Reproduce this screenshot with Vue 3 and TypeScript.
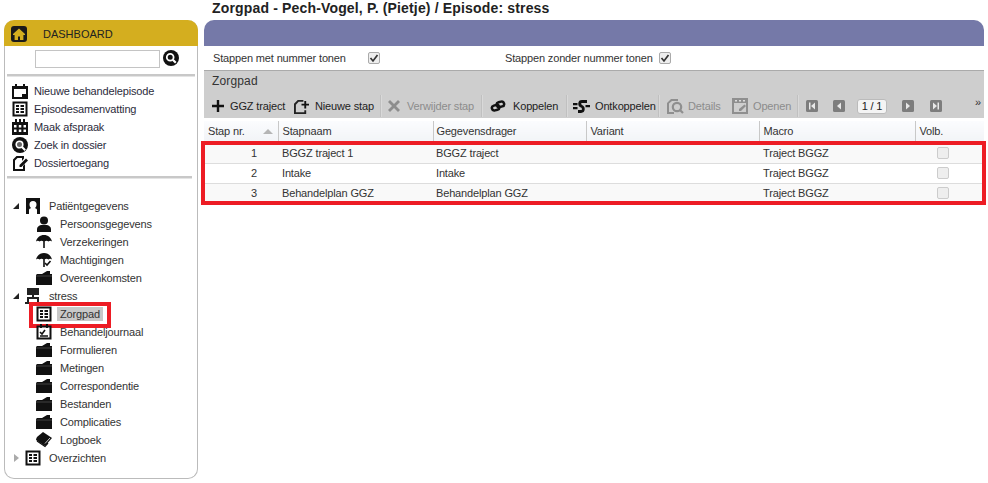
<template>
  <div class="page">
    <svg class="sprite" width="0" height="0" aria-hidden="true">
      <symbol id="i-home" viewBox="0 0 16 16"><rect x="0" y="0" width="16" height="16" rx="3" fill="#1a1a1a"/><path d="M8 2.500 2 8v1h1.600v5H7v-3.400h2V14h3.400V9H14V8z" fill="#d4ae1f"/></symbol>
      <symbol id="i-search" viewBox="0 0 16 16"><circle cx="8" cy="8" r="8" fill="#111"/><circle cx="7.200" cy="7.200" r="3.400" fill="none" stroke="#fff" stroke-width="1.800"/><path d="m9.800 9.800 3 3" stroke="#fff" stroke-width="2.200"/></symbol>
      <symbol id="i-cal-new" viewBox="0 0 16 16"><path d="M0 3h3V1h2v2h6V1h2v2h3v13H0zM2 6v8h8v-3h4V6z" fill="#111"/><path d="M11 12h3l-3 2z" fill="#111"/></symbol>
      <symbol id="i-list" viewBox="0 0 16 16"><path d="M1.500 1.500h13v13h-13z" fill="#fff" stroke="#111" stroke-width="2"/><path d="M4 4h3v2H4zM8.500 4H12v2H8.500zM4 7h3v2H4zM8.500 7H12v2H8.500zM4 10h3v2H4zM8.500 10H12v2H8.500z" fill="#111"/></symbol>
      <symbol id="i-cal" viewBox="0 0 16 16"><path d="M0 3h3V0h2v3h2V0h2v3h2V0h2v3h3v13H0z" fill="#111"/><path d="M2 6h2.500v2.500H2zM6.800 6h2.500v2.500H6.800zM11.500 6H14v2.500h-2.500zM2 10.500h2.500V13H2zM6.800 10.500h2.500V13H6.800zM11.500 10.500H14V13h-2.500z" fill="#fff"/></symbol>
      <symbol id="i-zoom" viewBox="0 0 16 16"><circle cx="8" cy="8" r="8" fill="#111"/><circle cx="7.500" cy="7.500" r="3.300" fill="#666" stroke="#fff" stroke-width="1.600"/><path d="m10 10 3.200 3.200" stroke="#fff" stroke-width="2"/></symbol>
      <symbol id="i-edit" viewBox="0 0 16 16"><path d="M4.500 1H12v2.500L10 6V3H5.500L3 5.500V14h8v-3l2-2v7H1V4.500z" fill="#111"/><path d="M14 3.500 16 5.500 9.500 12H7.500v-2z" fill="#111"/></symbol>
      <symbol id="i-patient" viewBox="0 0 16 16"><path d="M1 0h14v16h-3v-4c0-1-1-1.500-2-2 1-1 1.500-2 1.500-3.500a3.500 3.500 0 0 0-7 0C4.500 8 5 9 6 10c-1 .5-2 1-2 2v4H1z" fill="#111"/></symbol>
      <symbol id="i-person" viewBox="0 0 16 16"><circle cx="8" cy="4.500" r="4" fill="#111"/><path d="M1 16v-3c0-2 2-3.500 4-4h6c2 .5 4 2 4 4v3z" fill="#111"/></symbol>
      <symbol id="i-umbrella" viewBox="0 0 16 16"><path d="M8 1C4 1 1 3.500 0 7.500c1.200-1 2.500-1 3.500 0 1.200-1 2.500-1 3.700-.3V14h1.600V7.200c1.200-.7 2.500-.7 3.700.3 1-1 2.300-1 3.500 0C15 3.500 12 1 8 1z" fill="#111"/></symbol>
      <symbol id="i-umbrella-check" viewBox="0 0 16 16"><path d="M8 1C4 1 1 3.500 0 7.500c1.200-1 2.500-1 3.500 0 1.200-1 2.500-1 3.700-.3V15h1.600V7.200c1.200-.7 2.500-.7 3.700.3 1-1 2.300-1 3.500 0C15 3.500 12 1 8 1z" fill="#111"/><path d="m9 11 2 2 3.500-4" fill="none" stroke="#111" stroke-width="1.600"/></symbol>
      <symbol id="i-folder" viewBox="0 0 16 16"><path d="M0 5 1 4h5l5-3h3v3h2v11H0z" fill="#111"/><path d="M0 6h16" stroke="#666" stroke-width=".6"/></symbol>
      <symbol id="i-network" viewBox="0 0 16 16"><path d="M2 0h12v7H2zM7 7h2v2h5v5h-2v-3H4v3H2V9h5z" fill="#222"/><path d="M0 14h6v2H0zM10 14h6v2h-6z" fill="#222"/></symbol>
      <symbol id="i-journal" viewBox="0 0 16 16"><path d="M1.500 2.500h13v12h-13z" fill="#fff" stroke="#111" stroke-width="2"/><path d="M4 0h2v4H4zM10 0h2v4h-2z" fill="#111"/><path d="m4 8 2 2 3-4M4 12h8" fill="none" stroke="#111" stroke-width="1.600"/></symbol>
      <symbol id="i-book" viewBox="0 0 16 16"><path d="M7 0l9 6-7 8-9-6c0-1 .5-2 1-3z" fill="#111"/><path d="m1 9 8 5.500 3-3.500" fill="none" stroke="#111" stroke-width="1.200"/><path d="M9 11.500 14 6" stroke="#fff" stroke-width=".8"/></symbol>
      <symbol id="i-plus" viewBox="0 0 12 12"><path d="M4.800 0h2.400v4.800H12v2.400H7.200V12H4.800V7.200H0V4.800h4.800z" fill="#111"/></symbol>
      <symbol id="i-new" viewBox="0 0 16 16"><path d="M4 1h6v2H5L2 6v8h9v-2h2v4H0V5z" fill="#222"/><path d="M8 5h3V2h2v3h3v2h-3v3h-2V7H8z" fill="#111"/></symbol>
      <symbol id="i-x" viewBox="0 0 12 12"><path d="M0 2 2 0l4 4 4-4 2 2-4 4 4 4-2 2-4-4-4 4-2-2 4-4z" fill="#8d8d8d"/></symbol>
      <symbol id="i-link" viewBox="0 0 16 12"><g transform="rotate(-15 8 6)" fill="none" stroke="#111" stroke-width="2.500"><rect x="1.500" y="4.500" width="7.500" height="5" rx="2.500"/><rect x="7" y="2.500" width="7.500" height="5" rx="2.500"/></g></symbol>
      <symbol id="i-unlink" viewBox="0 0 17 13"><path d="M0 3h4.500v2.200H0zM0 7h4.500v2.200H0zM12.500 5h4.500v2.200h-4.500z" fill="#111"/><path d="M14 1.500H9C6 1.500 6 5.300 8.500 6.300s2.500 5.200-.5 5.200H5" fill="none" stroke="#111" stroke-width="2.800"/></symbol>
      <symbol id="i-details" viewBox="0 0 17 16"><path d="M4 1h7v2H5L2 5.500V14h5v2H0V5z" fill="#8f8f8f"/><circle cx="10" cy="9" r="4.200" fill="none" stroke="#8f8f8f" stroke-width="2.200"/><path d="m13 12 3 3" stroke="#8f8f8f" stroke-width="2.200"/></symbol>
      <symbol id="i-open" viewBox="0 0 16 16"><path d="M1 1h14v14H1z" fill="none" stroke="#8f8f8f" stroke-width="2"/><path d="M1 1h14v4H1z" fill="#8f8f8f"/><path d="M3 2h2v1.500H3zM7 2h2v1.500H7zM11 2h2v1.500h-2z" fill="#ddd"/><path d="M12.500 6.500 14 8l-5 5H7v-2z" fill="#8f8f8f"/></symbol>
      <symbol id="i-first" viewBox="0 0 12 12"><rect width="12" height="12" rx="1.500" fill="#7d7d7d"/><path d="M3 2.500h1.500v7H3zM9 2.500v7L5 6z" fill="#e8e8e8"/></symbol>
      <symbol id="i-prev" viewBox="0 0 12 12"><rect width="12" height="12" rx="1.500" fill="#7d7d7d"/><path d="M8 2.500v7L4 6z" fill="#e8e8e8"/></symbol>
      <symbol id="i-next" viewBox="0 0 12 12"><rect width="12" height="12" rx="1.500" fill="#7d7d7d"/><path d="M4 2.500v7L8 6z" fill="#e8e8e8"/></symbol>
      <symbol id="i-last" viewBox="0 0 12 12"><rect width="12" height="12" rx="1.500" fill="#7d7d7d"/><path d="M7.500 2.500H9v7H7.500zM3 2.500v7L7 6z" fill="#e8e8e8"/></symbol>
    </svg>

    <aside class="side">
      <div class="side-head">
        <svg class="home"><use href="#i-home" /></svg>
        <span>DASHBOARD</span>
      </div>
      <div class="search">
        <input class="search-input" type="text" />
        <svg class="search-icon"><use href="#i-search" /></svg>
      </div>
      <div class="rule"></div>
      <ul class="actions">
        <li v-for="a in actions" :key="a.label">
          <svg class="ico"><use :href="'#' + a.icon" /></svg>
          <span>{{ a.label }}</span>
        </li>
      </ul>
      <div class="rule"></div>
      <ul class="tree">
        <li v-for="n in tree" :key="n.label" class="node" :class="{ child: n.child, active: n.active }">
          <span v-if="!n.child" class="arrow" :class="{ closed: n.closed }"></span>
          <svg class="ico"><use :href="'#' + n.icon" /></svg>
          <span class="node-label">{{ n.label }}</span>
          <span v-if="n.active" class="mark-node"></span>
        </li>
      </ul>
    </aside>

    <main class="main">
      <h1 class="title">Zorgpad - Pech-Vogel, P. (Pietje) / Episode: stress</h1>
      <div class="band"></div>
      <div class="options">
        <label class="opt first">Stappen met nummer tonen</label>
        <span class="check"><svg viewBox="0 0 10 10"><path d="m1.500 5 2.500 3 4.500-6" fill="none" stroke="#333" stroke-width="1.700"/></svg></span>
        <label class="opt second">Stappen zonder nummer tonen</label>
        <span class="check"><svg viewBox="0 0 10 10"><path d="m1.500 5 2.500 3 4.500-6" fill="none" stroke="#333" stroke-width="1.700"/></svg></span>
      </div>
      <section class="panel">
        <div class="panel-title">Zorgpad</div>
        <div class="toolbar">
          <i v-for="s in seps" :key="s" class="sep" :style="{ left: s + 'px' }"></i>
          <button v-for="t in tools" :key="t.label" class="tool" :class="[t.cls, { off: t.off }]">
            <svg :style="{ width: t.w + 'px', height: t.h + 'px' }"><use :href="'#' + t.icon" /></svg>
            <span>{{ t.label }}</span>
          </button>
          <div class="pager">
            <svg class="pg"><use href="#i-first" /></svg>
            <svg class="pg"><use href="#i-prev" /></svg>
            <span class="page-no">1 / 1</span>
            <svg class="pg"><use href="#i-next" /></svg>
            <svg class="pg"><use href="#i-last" /></svg>
          </div>
          <span class="more">»</span>
        </div>
      </section>
      <div class="grid-wrap">
        <table class="grid">
          <colgroup>
            <col style="width: 74px" /><col style="width: 155px" /><col style="width: 153px" />
            <col style="width: 173px" /><col style="width: 156px" /><col />
          </colgroup>
          <thead>
            <tr>
              <th>Stap nr.<span class="sort"></span></th>
              <th>Stapnaam</th>
              <th>Gegevensdrager</th>
              <th>Variant</th>
              <th>Macro</th>
              <th>Volb.</th>
            </tr>
          </thead>
          <tbody>
            <tr v-for="r in rows" :key="r.nr">
              <td class="nr">{{ r.nr }}</td>
              <td>{{ r.name }}</td>
              <td>{{ r.carrier }}</td>
              <td></td>
              <td>Traject BGGZ</td>
              <td class="done"><span class="box"></span></td>
            </tr>
          </tbody>
        </table>
        <div class="mark-rows"></div>
      </div>
    </main>
  </div>
</template>

<script setup lang="ts">
const actions = [
  { label: 'Nieuwe behandelepisode', icon: 'i-cal-new' },
  { label: 'Episodesamenvatting', icon: 'i-list' },
  { label: 'Maak afspraak', icon: 'i-cal' },
  { label: 'Zoek in dossier', icon: 'i-zoom' },
  { label: 'Dossiertoegang', icon: 'i-edit' },
]

type Node = { label: string; icon: string; child?: boolean; active?: boolean; closed?: boolean }
const tree: Node[] = [
  { label: 'Patiëntgegevens', icon: 'i-patient' },
  { label: 'Persoonsgegevens', icon: 'i-person', child: true },
  { label: 'Verzekeringen', icon: 'i-umbrella', child: true },
  { label: 'Machtigingen', icon: 'i-umbrella-check', child: true },
  { label: 'Overeenkomsten', icon: 'i-folder', child: true },
  { label: 'stress', icon: 'i-network' },
  { label: 'Zorgpad', icon: 'i-list', child: true, active: true },
  { label: 'Behandeljournaal', icon: 'i-journal', child: true },
  { label: 'Formulieren', icon: 'i-folder', child: true },
  { label: 'Metingen', icon: 'i-folder', child: true },
  { label: 'Correspondentie', icon: 'i-folder', child: true },
  { label: 'Bestanden', icon: 'i-folder', child: true },
  { label: 'Complicaties', icon: 'i-folder', child: true },
  { label: 'Logboek', icon: 'i-book', child: true },
  { label: 'Overzichten', icon: 'i-list', closed: true },
]

const seps = [176, 277, 362, 454, 593]

const tools = [
  { label: 'GGZ traject', icon: 'i-plus', w: 12, h: 12, cls: 't-add' },
  { label: 'Nieuwe stap', icon: 'i-new', w: 15, h: 15, cls: 't-new' },
  { label: 'Verwijder stap', icon: 'i-x', w: 12, h: 12, cls: 't-del', off: true },
  { label: 'Koppelen', icon: 'i-link', w: 16, h: 12, cls: 't-link' },
  { label: 'Ontkoppelen', icon: 'i-unlink', w: 17, h: 13, cls: 't-unlink' },
  { label: 'Details', icon: 'i-details', w: 17, h: 16, cls: 't-det', off: true },
  { label: 'Openen', icon: 'i-open', w: 16, h: 16, cls: 't-open', off: true },
]

const rows = [
  { nr: 1, name: 'BGGZ traject 1', carrier: 'BGGZ traject' },
  { nr: 2, name: 'Intake', carrier: 'Intake' },
  { nr: 3, name: 'Behandelplan GGZ', carrier: 'Behandelplan GGZ' },
]
</script>

<style>
html, body { margin: 0; background: #fff; }
</style>

<style scoped>
.page {
  display: flex;
  width: 988px;
  height: 483px;
  overflow: hidden;
  font-family: "Liberation Sans", Arial, sans-serif;
  font-size: 11px;
  letter-spacing: -0.15px;
  color: #333;
  background: #fff;
}
.sprite { position: absolute; }
ul { list-style: none; margin: 0; padding: 0; }

.side {
  box-sizing: border-box;
  width: 194px;
  height: 459px;
  margin: 20px 0 0 4px;
  border: 1px solid #bbb;
  border-top: 0;
  border-radius: 10px;
  flex-shrink: 0;
}
.side-head {
  display: flex;
  align-items: center;
  height: 26px;
  margin: 0 -1px;
  background: #d4ae1f;
  border-radius: 10px 10px 0 0;
  color: #222;
  letter-spacing: 0;
}
.side-head span { margin-top: 2px; }
.home { width: 16px; height: 16px; margin: 2px 16px 0 7px; }
.search { display: flex; align-items: center; height: 26px; padding-left: 30px; }
.search-input {
  box-sizing: border-box;
  width: 125px;
  height: 18px;
  border: 1px solid #c4c4c4;
  padding: 0;
  background: #fff;
}
.search-icon { width: 16px; height: 16px; margin-left: 3px; margin-bottom: 2px; }
.rule { height: 2px; margin: 2px 2px 0 2px; background: #c8c8c8; border-bottom: 1px solid #e4e4e4; }
.actions { padding-top: 5px; }
.actions li { display: flex; align-items: center; height: 18px; padding-left: 7px; color: #2c2c3c; }
.actions li span { margin-left: 6px; }
.actions + .rule { margin: 4px 5px 0 2px; }
.ico { width: 16px; height: 16px; flex-shrink: 0; }

.tree { padding-top: 18px; }
.node { position: relative; display: flex; align-items: center; height: 18px; padding-left: 20px; color: #333; }
.node .node-label { margin-left: 8px; }
.node.child { padding-left: 31px; }
.node.child .node-label { margin-left: 8px; }
.arrow {
  position: absolute;
  left: 8px;
  top: 6px;
  width: 0;
  height: 0;
  border-style: solid;
  border-width: 0 0 6px 6px;
  border-color: transparent transparent #222 transparent;
}
.arrow.closed {
  border-width: 4px 0 4px 5px;
  border-color: transparent transparent transparent #aaa;
  top: 5px;
  left: 9px;
}
.node.active .node-label { background: #c8c8c8; padding: 1px 3px 1px 3px; margin-left: 5px; }
.mark-node {
  position: absolute;
  left: 24px;
  top: -3px;
  width: 74px;
  height: 18px;
  border: 4px solid #ed1c24;
  pointer-events: none;
}

.main { flex: 1; min-width: 0; margin: 0 4px 0 6px; }
.title {
  height: 20px;
  margin: 0;
  padding-left: 8px;
  font-size: 14px;
  line-height: 17px;
  font-weight: bold;
  letter-spacing: .16px;
  color: #222;
}
.band { height: 26px; background: #7579a8; border-radius: 10px 10px 0 0; }
.options { display: flex; align-items: center; height: 24px; }
.opt { color: #333; }
.first { margin-left: 9px; width: 155px; }
.second { margin-left: 125px; width: 154px; }
.check {
  box-sizing: border-box;
  width: 12px;
  height: 12px;
  border: 1px solid #aaa;
  border-radius: 2px;
  background: #eee;
  display: flex;
}
.check svg { width: 10px; height: 10px; }

.panel { height: 48px; background: #cecece; border-top: 1px solid #aaa; box-sizing: border-box; }
.panel-title { height: 22px; padding: 3px 0 0 8px; box-sizing: border-box; font-size: 12px; line-height: 15px; color: #333; letter-spacing: .15px; }
.toolbar { display: flex; align-items: center; height: 25px; position: relative; }
.sep { position: absolute; top: 2px; width: 1px; height: 22px; background: #c0c0c0; border-right: 1px solid #d9d9d9; }
.tool {
  display: flex;
  align-items: center;
  padding: 0;
  border: 0;
  background: none;
  font: inherit;
  letter-spacing: inherit;
  color: #222;
  position: absolute;
  top: 4px;
  height: 18px;
}
.tool.off { color: #8c8c8c; }
.t-add { left: 8px; }
.t-add span { margin-left: 6px; }
.t-new { left: 90px; }
.t-new span { margin-left: 6px; }
.t-del { left: 184px; }
.t-del span { margin-left: 7px; }
.t-link { left: 286px; }
.t-link span { margin-left: 7px; }
.t-unlink { left: 369px; }
.t-unlink span { margin-left: 5px; }
.t-det { left: 463px; }
.t-det span { margin-left: 4px; }
.t-open { left: 528px; }
.t-open span { margin-left: 5px; }
.pager { position: absolute; left: 602px; top: 5px; display: flex; align-items: center; height: 16px; }
.pg { width: 12px; height: 12px; }
.pg:nth-child(1) { margin-right: 15px; }
.pg:nth-child(2) { margin-right: 12px; }
.pg:nth-child(4) { margin: 0 16px 0 15px; }
.page-no {
  box-sizing: border-box;
  width: 30px;
  height: 15px;
  line-height: 13px;
  text-align: center;
  background: #f4f4f4;
  border: 1px solid #bbb;
  border-radius: 3px;
  color: #222;
}
.more { position: absolute; right: 3px; top: 3px; font-size: 11px; color: #333; }

.grid-wrap { position: relative; margin-top: 3px; }
.grid { width: 100%; border-collapse: collapse; table-layout: fixed; }
th {
  height: 22px;
  padding: 0 0 2px 4px;
  font-weight: normal;
  text-align: left;
  color: #333;
  background: linear-gradient(#fbfcfe, #f1f3f6);
  border-right: 1px solid #c8c8c8;
  position: relative;
  box-sizing: border-box;
}
th:nth-child(3) { padding-left: 3px; }
th:last-child { border-right: 0; }
.sort {
  position: absolute;
  right: 5px;
  top: 8px;
  width: 0;
  height: 0;
  border-style: solid;
  border-width: 0 5px 5px 5px;
  border-color: transparent transparent #b5b5b5 transparent;
}
td {
  height: 20px;
  padding: 0 0 0 4px;
  box-sizing: border-box;
  color: #333;
  border-bottom: 1px solid #ddd;
  background: #fff;
}
td:nth-child(3) { padding-left: 3px; }
tbody tr:nth-child(odd) td { background: #f9f9f9; }
td.nr { text-align: right; padding-right: 21px; }
td.done { text-align: left; padding-left: 22px; }
.box {
  display: block;
  box-sizing: border-box;
  width: 12px;
  height: 12px;
  border: 1px solid #ccc;
  border-radius: 2px;
  background: #eee;
}
.mark-rows {
  position: absolute;
  left: -3px;
  right: -2px;
  top: 20px;
  height: 56px;
  border: 4px solid #ed1c24;
  pointer-events: none;
}
</style>
